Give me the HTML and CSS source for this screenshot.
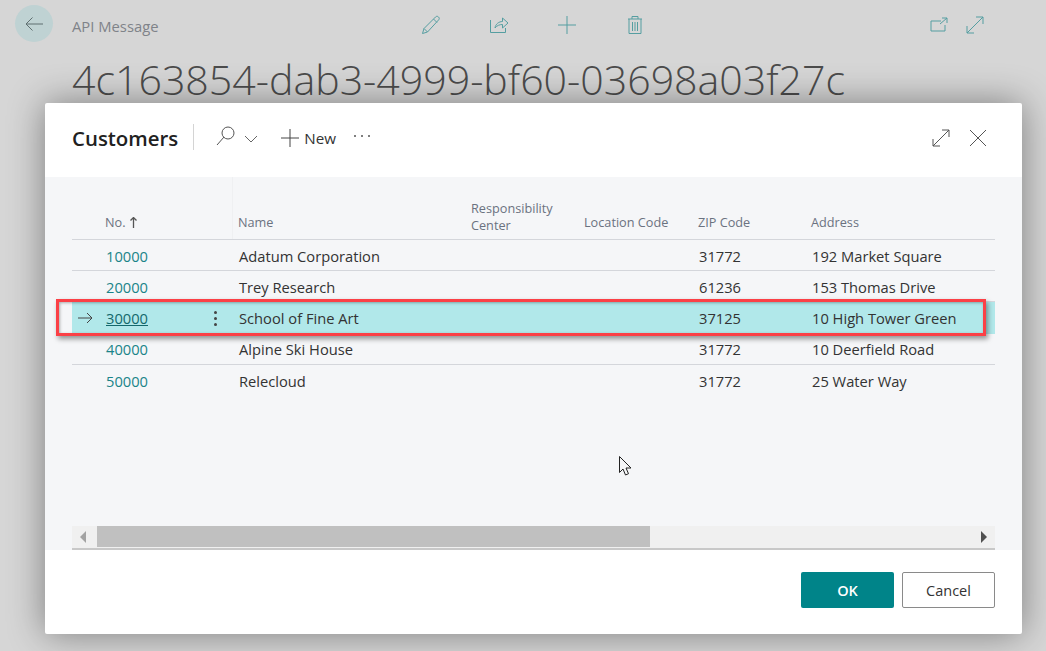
FILE: index.html
```html
<!DOCTYPE html>
<html lang="en">
<head>
    <meta charset="UTF-8">
    <title>Customers</title>
    <link rel="stylesheet" href="styles.css">
</head>
<body>
    <!-- page behind the dialog -->
    <section class="card-page">
        <header class="card-bar">
            <div class="back-btn">
                <svg width="18" height="14" viewBox="0 0 18 14"><path d="M18 7H1M7.500.500L1 7l6.500 6.500" /></svg>
            </div>
            <span class="card-caption">API Message</span>
            <div class="card-actions">
                <svg width="20" height="20" viewBox="0 0 20 20"><path d="M1.500 18.500l1.500-5L14.500 2c1-1 2-1 3 0s1 2 0 3L6.500 17zM3 13.500l3.500 3.500M12.500 4l3.500 3.500" /></svg>
                <svg width="20" height="20" viewBox="0 0 20 20"><path d="M1.500 5v12.500h15V13M6 13c.5-4 4-6.500 7.500-6.500V3l5.500 5-5.500 5V9.500C10.500 9.500 8 10.500 6 13z" /></svg>
                <svg width="20" height="20" viewBox="0 0 20 20"><path d="M10 1v18M1 10h18" /></svg>
                <svg width="20" height="20" viewBox="0 0 20 20"><path d="M3 4h14M7 4V1.500h6V4M4 4v14.500h12V4M7.500 7v9M10 7v9M12.500 7v9" /></svg>
            </div>
            <div class="card-actions-right">
                <svg width="18" height="16" viewBox="0 0 18 16"><path d="M11 4H1v10h14V8M10 7l7-6M12 1h5v5" /></svg>
                <svg width="18" height="18" viewBox="0 0 18 18"><path d="M1 17L17 1M10 1h7v7M1 10v7h7" /></svg>
            </div>
        </header>
        <h1 class="card-title">4c163854-dab3-4999-bf60-03698a03f27c</h1>
    </section>

    <div class="dialog">
        <header class="dialog-head">
            <h2 class="dialog-title">Customers</h2>
            <div class="dialog-tools">
                <svg class="icon-search" width="20" height="20" viewBox="0 0 20 20"><path d="M1 19l7-8" /><circle cx="12" cy="7" r="6" /></svg>
                <svg class="icon-chevron" width="14" height="8" viewBox="0 0 14 8"><path d="M1 1l6 6 6-6" /></svg>
                <span class="tool-new">
                    <svg width="18" height="18" viewBox="0 0 18 18"><path d="M9 0v18M0 9h18" /></svg>
                    New
                </span>
                <span class="tool-more">
                    <i></i><i></i><i></i>
                </span>
            </div>
            <div class="dialog-win">
                <svg width="18" height="18" viewBox="0 0 18 18"><path d="M1 17L17 1M10 1h7v7M1 10v7h7" /></svg>
                <svg width="20" height="20" viewBox="0 0 20 20"><path d="M2 2l16 16M18 2L2 18" /></svg>
            </div>
        </header>

        <div class="dialog-body">
            <div class="list">
                <div class="row row-head">
                    <div class="cell cell-mark"></div>
                    <div class="cell cell-no">No. <svg class="sort" width="7" height="11" viewBox="0 0 7 11"><path d="M3.500 11V1M.5 3.500L3.500.5l3 3" /></svg></div>
                    <div class="cell cell-dots"></div>
                    <div class="cell cell-name">Name</div>
                    <div class="cell cell-resp">Responsibility<br>Center</div>
                    <div class="cell cell-loc">Location Code</div>
                    <div class="cell cell-zip">ZIP Code</div>
                    <div class="cell cell-addr">Address</div>
                </div>
                <div class="row">
                    <div class="cell cell-mark"></div>
                    <div class="cell cell-no"><a>10000</a></div>
                    <div class="cell cell-dots"></div>
                    <div class="cell cell-name">Adatum Corporation</div>
                    <div class="cell cell-resp"></div>
                    <div class="cell cell-loc"></div>
                    <div class="cell cell-zip">31772</div>
                    <div class="cell cell-addr">192 Market Square</div>
                </div>
                <div class="row">
                    <div class="cell cell-mark"></div>
                    <div class="cell cell-no"><a>20000</a></div>
                    <div class="cell cell-dots"></div>
                    <div class="cell cell-name">Trey Research</div>
                    <div class="cell cell-resp"></div>
                    <div class="cell cell-loc"></div>
                    <div class="cell cell-zip">61236</div>
                    <div class="cell cell-addr">153 Thomas Drive</div>
                </div>
                <div class="row row-active">
                    <div class="cell cell-mark">
                        <svg width="15" height="12" viewBox="0 0 15 12"><path d="M0 6h14M9 1l5 5-5 5" /></svg>
                    </div>
                    <div class="cell cell-no"><a>30000</a></div>
                    <div class="cell cell-dots"><i></i><i></i><i></i></div>
                    <div class="cell cell-name">School of Fine Art</div>
                    <div class="cell cell-resp"></div>
                    <div class="cell cell-loc"></div>
                    <div class="cell cell-zip">37125</div>
                    <div class="cell cell-addr">10 High Tower Green</div>
                </div>
                <div class="row">
                    <div class="cell cell-mark"></div>
                    <div class="cell cell-no"><a>40000</a></div>
                    <div class="cell cell-dots"></div>
                    <div class="cell cell-name">Alpine Ski House</div>
                    <div class="cell cell-resp"></div>
                    <div class="cell cell-loc"></div>
                    <div class="cell cell-zip">31772</div>
                    <div class="cell cell-addr">10 Deerfield Road</div>
                </div>
                <div class="row row-last">
                    <div class="cell cell-mark"></div>
                    <div class="cell cell-no"><a>50000</a></div>
                    <div class="cell cell-dots"></div>
                    <div class="cell cell-name">Relecloud</div>
                    <div class="cell cell-resp"></div>
                    <div class="cell cell-loc"></div>
                    <div class="cell cell-zip">31772</div>
                    <div class="cell cell-addr">25 Water Way</div>
                </div>
            </div>

            <div class="scrollbar">
                <span class="arrow-left"></span>
                <div class="scroll-track"><div class="scroll-thumb"></div></div>
                <span class="arrow-right"></span>
            </div>
        </div>

        <footer class="dialog-foot">
            <button class="btn btn-ok">OK</button>
            <button class="btn btn-cancel">Cancel</button>
        </footer>

        <!-- annotation and cursor sit on top of the screenshot -->
        <div class="highlight"></div>
        <svg class="cursor" width="13" height="20" viewBox="0 0 13 20"><path d="M.5.500v16l3.500-3.500 2.500 6 3-1.300-2.500-5.700h5z" /></svg>
    </div>
</body>
</html>
```

FILE: styles.css
```css
* {
    box-sizing: border-box;
}

html, body {
    height: 100%;
}

body {
    margin: 0;
    background: #d6d6d6;
    font-family: 'Open Sans', 'Noto Sans', sans-serif;
    color: #333;
    overflow: hidden;
}

svg {
    display: block;
    fill: none;
    stroke: currentColor;
    stroke-width: 1;
}

/* page behind */
.card-page {
    padding: 5px 0 0 15px;
}

.card-bar {
    display: flex;
    align-items: center;
    height: 37px;
}

.back-btn {
    width: 38px;
    height: 37px;
    border-radius: 50%;
    background: #bfd2d3;
    color: #5f6f70;
    display: flex;
    align-items: center;
    justify-content: center;
}

.card-caption {
    margin-left: 19px;
    margin-top: 4px;
    font-size: 14.800px;
    color: #7f8389;
    width: 349px;
}

.card-actions {
    display: flex;
    gap: 48px;
    color: #559ea1;
    margin-top: 2px;
}

.card-actions-right {
    display: flex;
    align-items: center;
    gap: 18px;
    margin-left: 285px;
    color: #559ea1;
    margin-top: 2px;
}

.card-title {
    margin: 12px 0 0 57px;
    font-size: 41.100px;
    font-weight: 300;
    line-height: 50px;
    color: #4c4c4c;
    white-space: nowrap;
}

/* dialog */
.dialog {
    position: absolute;
    left: 45px;
    top: 103px;
    width: 977px;
    height: 531px;
    background: #fff;
    border-radius: 2px;
    display: flex;
    flex-direction: column;
    box-shadow: 0 0 36px rgba(0, 0, 0, .42);
}

.dialog-head {
    height: 74px;
    flex: none;
    display: flex;
    align-items: flex-start;
    padding: 21px 34px 0 27px;
}

.dialog-title {
    margin: 0;
    font-size: 20.400px;
    font-weight: 600;
    line-height: 28px;
    color: #212121;
    padding-right: 15px;
    border-right: 1px solid #d4d4d4;
    height: 26px;
}

.dialog-tools {
    display: flex;
    align-items: center;
    height: 26px;
    color: #555;
    margin-left: 22px;
}

.icon-search {
    margin-top: -3px;
}

.icon-chevron {
    margin-left: 8px;
    margin-top: 4px;
    color: #666;
}

.tool-new {
    display: flex;
    align-items: center;
    gap: 5px;
    margin-left: 23px;
    margin-top: 2px;
    font-size: 15.200px;
    color: #333;
}

.tool-new svg {
    color: #444;
}

.tool-more {
    display: flex;
    gap: 5px;
    margin-left: 18px;
    margin-top: -2px;
}

.tool-more i {
    width: 2px;
    height: 2px;
    background: #555;
    border-radius: 50%;
}

.dialog-win {
    margin-left: auto;
    display: flex;
    align-items: center;
    gap: 18px;
    color: #555;
    margin-top: 4px;
}

.dialog-body {
    height: 373px;
    flex: none;
    background: #f5f6f8;
    padding: 0 27px;
    display: flex;
    flex-direction: column;
}

.list {
    flex: 1;
}

.row {
    display: flex;
    height: 31px;
    align-items: center;
    padding-top: 1px;
    border-bottom: 1px solid #d4d6db;
    font-size: 14.700px;
    color: #333;
}

.row-head {
    height: 63px;
    align-items: flex-end;
    padding-top: 0;
    padding-bottom: 8px;
    font-size: 12.700px;
    line-height: 17px;
    color: #6b7280;
    /* faint column divider above the header line */
    background: linear-gradient(#eff0f2, #eff0f2) 160px 0 / 1px 100% no-repeat;
}

.row-head .cell-no {
    display: flex;
    align-items: center;
    gap: 4px;
    padding-left: 0;
}

.row-head .cell-resp {
    margin-bottom: -3px;
}

.row-last {
    border-bottom: 0;
}

.row-active {
    background: #b1e8ea;
    border-bottom-color: #b1e8ea;
    height: 32px;
}

.row-active ~ .row {
    padding-top: 0;
}

.cell-mark {
    width: 33px;
    padding-left: 6px;
    color: #444;
}

.cell-no {
    width: 101px;
    padding-left: 1px;
}

.cell-no a {
    color: #1a8489;
}

.row-active .cell-no a {
    color: #14686c;
    text-decoration: underline;
}

.sort {
    color: #555;
    stroke-width: 1.300;
}

.cell-dots {
    width: 32px;
    padding-right: 14px;
    display: flex;
    flex-direction: column;
    align-items: center;
    gap: 3px;
}

.cell-dots i {
    width: 3px;
    height: 3px;
    border-radius: 50%;
    background: #444;
}

.cell-name {
    width: 233px;
    padding-left: 1px;
}

.row-head .cell-name {
    padding-left: 0;
}

.cell-resp {
    width: 113px;
}

.cell-loc {
    width: 114px;
}

.cell-zip {
    width: 113px;
    padding-left: 1px;
}

.row-head .cell-zip {
    padding-left: 0;
}

.cell-addr {
    flex: 1;
    padding-left: 1px;
    white-space: nowrap;
}

.row-head .cell-addr {
    padding-left: 0;
}

.scrollbar {
    height: 24px;
    flex: none;
    background: #f0f0f0;
    border-bottom: 2px solid #c8c8c8;
    display: flex;
    align-items: center;
    padding-bottom: 1px;
}

.arrow-left {
    width: 0;
    height: 0;
    margin-left: 8px;
    border: 6px solid transparent;
    border-left-width: 0;
    border-right: 6px solid #a3a3a3;
}

.scroll-track {
    flex: 1;
    margin-left: 11px;
    height: 21px;
}

.scroll-thumb {
    width: 553px;
    height: 100%;
    background: #c0c0c0;
}

.arrow-right {
    width: 0;
    height: 0;
    margin-right: 8px;
    border: 6px solid transparent;
    border-right-width: 0;
    border-left: 6px solid #505050;
}

.dialog-foot {
    flex: 1;
    display: flex;
    justify-content: flex-end;
    gap: 8px;
    padding: 22px 27px 0 0;
}

.btn {
    height: 36px;
    font-family: inherit;
    font-size: 14.500px;
    border-radius: 2px;
    padding: 0;
}

.btn-ok {
    width: 93px;
    background: #008489;
    border: 0;
    color: #fff;
    font-weight: 600;
}

.btn-cancel {
    width: 93px;
    background: #fff;
    border: 1px solid #8a8a8a;
    color: #333;
}

/* red annotation box */
.highlight {
    position: absolute;
    left: 11px;
    top: 196px;
    width: 930px;
    height: 37px;
    border: 3px solid #fb4046;
    box-shadow: 2px 3px 5px rgba(0, 0, 0, .4), inset 1px 1px 3px rgba(0, 0, 0, .3);
}

.cursor {
    position: absolute;
    left: 574px;
    top: 353px;
    stroke: #222;
    fill: #f5f6f8;
}
```
